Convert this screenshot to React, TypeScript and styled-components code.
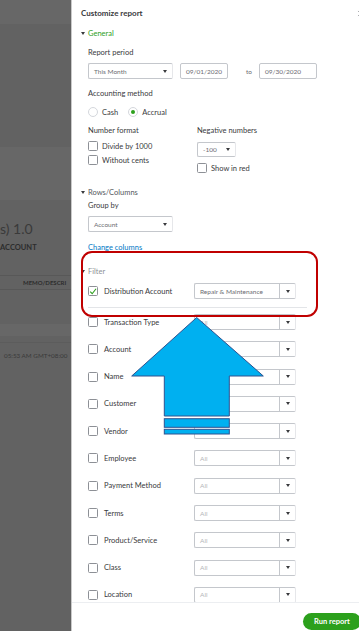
import styled, { createGlobalStyle } from "styled-components";
import { X } from "lucide-react";

const GlobalStyle = createGlobalStyle`
  html, body { margin: 0; padding: 0; }
  body {
    font-family: Lato, "Open Sans", sans-serif;
    color: #393a3d;
  }
`;

const Page = styled.div`
  position: relative;
  display: flex;
  width: 359px;
  height: 631px;
  overflow: hidden;
`;

/* ---------- dimmed report behind the drawer ---------- */

const Backdrop = styled.div`
  width: 71px;
  flex-shrink: 0;
  display: flex;
  flex-direction: column;
  background: #626262;
  color: #333;
  white-space: nowrap;
  overflow: hidden;
`;

const Band = styled.div<{ $h: number; $light?: boolean }>`
  height: ${(p) => p.$h}px;
  flex-shrink: 0;
  background: ${(p) => (p.$light ? "#676767" : "transparent")};
`;

const ReportTitle = styled.div`
  margin-top: 20px;
  font-size: 14px;
  line-height: 17px;
  color: #3a3a3a;
`;

const ReportSub = styled.div`
  margin-top: 6px;
  font-size: 7.5px;
  line-height: 10px;
  font-weight: 700;
  color: #2d2d2d;
`;

const TableHead = styled.div`
  margin-top: 22px;
  height: 13px;
  border-top: 1px solid #585858;
  border-bottom: 1px solid #585858;
  padding-left: 23px;
  font-size: 6px;
  line-height: 13px;
  font-weight: 700;
  color: #2d2d2d;
`;

const TimeCell = styled.div`
  margin-top: 6px;
  padding: 8px 0 0 4px;
  border-top: 1px solid #5c5c5c;
  font-size: 6.3px;
  line-height: 10px;
  color: #3a3a3a;
`;

/* ---------- drawer ---------- */

const Panel = styled.div`
  flex: 1;
  min-width: 0;
  display: flex;
  flex-direction: column;
  background: #fff;
  border-left: 1px solid #c9c9c9;
`;

const Scroll = styled.div`
  flex: 1;
  overflow: hidden;
  padding-left: 9px;
`;

const Header = styled.div`
  height: 26px;
  display: flex;
  align-items: center;
  justify-content: space-between;
  font-size: 8px;
  font-weight: 700;
  color: #393a3d;
  svg {
    margin-right: -6px;
    color: #6b6c72;
  }
`;

const Toggle = styled.div<{ $color?: string; $mt?: number }>`
  height: 14px;
  margin-top: ${(p) => p.$mt ?? 0}px;
  display: flex;
  align-items: center;
  gap: 3px;
  font-size: 7.5px;
  color: ${(p) => p.$color ?? "#55575d"};
  &::before {
    content: "";
    border-left: 2.5px solid transparent;
    border-right: 2.5px solid transparent;
    border-top: 3.5px solid #393a3d;
  }
`;

const Group = styled.div`
  padding-left: 7px;
  display: flex;
  flex-direction: column;
`;

const Label = styled.div<{ $mt?: number }>`
  margin-top: ${(p) => p.$mt ?? 0}px;
  height: 12px;
  line-height: 12px;
  font-size: 7.5px;
  color: #393a3d;
`;

const Row = styled.div<{ $mt?: number; $h?: number; $gap?: number }>`
  margin-top: ${(p) => p.$mt ?? 0}px;
  height: ${(p) => p.$h ?? 16}px;
  display: flex;
  align-items: center;
  gap: ${(p) => p.$gap ?? 0}px;
`;

const SelectBox = styled.div<{ $w: number; $h?: number; $mt?: number }>`
  box-sizing: border-box;
  width: ${(p) => p.$w}px;
  height: ${(p) => p.$h ?? 16}px;
  margin-top: ${(p) => p.$mt ?? 0}px;
  flex-shrink: 0;
  display: flex;
  align-items: center;
  border: 1px solid #c4c7cc;
  border-right-color: #e6e7ea;
  border-radius: 2px;
  font-size: 6.5px;
  color: #6b6c72;
`;

const SelectText = styled.span<{ $muted?: boolean }>`
  flex: 1;
  padding-left: 5px;
  white-space: nowrap;
  overflow: hidden;
  color: ${(p) => (p.$muted ? "#b3b5b9" : "#6b6c72")};
`;

const ArrowCell = styled.span<{ $split?: boolean }>`
  width: 15px;
  height: 100%;
  display: flex;
  align-items: center;
  justify-content: center;
  border-left: ${(p) => (p.$split ? "1px solid #c4c7cc" : "none")};
  &::after {
    content: "";
    border-left: 2.2px solid transparent;
    border-right: 2.2px solid transparent;
    border-top: 3px solid #393a3d;
  }
`;

const DateInput = styled.div<{ $w: number }>`
  box-sizing: border-box;
  width: ${(p) => p.$w}px;
  height: 16px;
  display: flex;
  align-items: center;
  padding-left: 5px;
  border: 1px solid #c4c7cc;
  border-radius: 2px;
  font-size: 6.5px;
  color: #6b6c72;
`;

const Spacer = styled.span<{ $w: number }>`
  width: ${(p) => p.$w}px;
  flex-shrink: 0;
`;

const To = styled.span`
  padding: 0 7px 0 18px;
  font-size: 6.5px;
  color: #6b6c72;
`;

const Radio = styled.span<{ $on?: boolean }>`
  box-sizing: border-box;
  width: 10px;
  height: 10px;
  border-radius: 50%;
  border: 1px solid #d4d7dc;
  display: flex;
  align-items: center;
  justify-content: center;
  &::after {
    content: "";
    display: ${(p) => (p.$on ? "block" : "none")};
    width: 4.5px;
    height: 4.5px;
    border-radius: 50%;
    background: #2ca01c;
  }
`;

const Option = styled.span`
  display: flex;
  align-items: center;
  gap: 4px;
  margin-right: 10px;
  font-size: 7.5px;
  color: #393a3d;
`;

const Box = styled.span`
  box-sizing: border-box;
  width: 10px;
  height: 10px;
  flex-shrink: 0;
  border: 1px solid #8d9096;
  border-radius: 1.5px;
  display: flex;
  align-items: center;
  justify-content: center;
`;

const CheckLabel = styled.span`
  font-size: 7.5px;
  color: #393a3d;
  white-space: nowrap;
`;

const Columns = styled.div`
  margin-top: 7px;
  display: flex;
`;

const Col = styled.div<{ $w?: number }>`
  width: ${(p) => (p.$w ? `${p.$w}px` : "auto")};
  display: flex;
  flex-direction: column;
`;

const Link = styled.div`
  margin-top: 10px;
  height: 12px;
  line-height: 12px;
  font-size: 7.5px;
  color: #0077c5;
`;

const FilterName = styled.div`
  width: 106px;
  flex-shrink: 0;
  display: flex;
  align-items: center;
  gap: 6px;
`;

const Divider = styled.div`
  margin-top: 8px;
  width: 219px;
  height: 1px;
  background: #e3e5e8;
`;

const FilterList = styled.div`
  margin-top: 6px;
  display: flex;
  flex-direction: column;
  gap: 11.3px;
`;

const Footer = styled.div`
  height: 29px;
  flex-shrink: 0;
  box-sizing: border-box;
  border-top: 1px solid #eceef1;
  display: flex;
  justify-content: flex-end;
  align-items: flex-start;
  padding-top: 10px;
`;

const RunButton = styled.button`
  width: 58px;
  height: 17px;
  margin-right: -2px;
  border: none;
  border-radius: 9px;
  background: #2ca01c;
  color: #fff;
  font-family: inherit;
  font-size: 7.5px;
  font-weight: 700;
  padding: 0;
`;

/* ---------- overlays ---------- */

const Highlight = styled.div`
  position: absolute;
  left: 81px;
  top: 251px;
  width: 237px;
  height: 66px;
  box-sizing: border-box;
  border: 2px solid #c00000;
  border-radius: 11px;
  pointer-events: none;
`;

const ArrowSvg = styled.svg`
  position: absolute;
  left: 130px;
  top: 316px;
  pointer-events: none;
`;

function Check() {
  return (
    <svg width="9" height="9" viewBox="0 0 10 10">
      <path d="M1.5 5.2 L4 7.8 L8.8 1.6" fill="none" stroke="#2ca01c" strokeWidth="1.4" />
    </svg>
  );
}

function Select(props: { w: number; text: string; h?: number; mt?: number; muted?: boolean; split?: boolean }) {
  return (
    <SelectBox $w={props.w} $h={props.h} $mt={props.mt}>
      <SelectText $muted={props.muted}>{props.text}</SelectText>
      <ArrowCell $split={props.split} />
    </SelectBox>
  );
}

const filters = [
  "Transaction Type",
  "Account",
  "Name",
  "Customer",
  "Vendor",
  "Employee",
  "Payment Method",
  "Terms",
  "Product/Service",
  "Class",
  "Location",
];

export default function App() {
  return (
    <Page>
      <GlobalStyle />
      <Backdrop>
        <Band $h={24} $light />
        <Band $h={123} />
        <Band $h={53} $light />
        <ReportTitle>s) 1.0</ReportTitle>
        <ReportSub>ACCOUNT</ReportSub>
        <TableHead>MEMO/DESCRI</TableHead>
        <Band $h={34} />
        <Band $h={12} $light />
        <TimeCell>05:53 AM GMT+08:00</TimeCell>
      </Backdrop>

      <Panel>
        <Scroll>
          <Header>
            Customize report
            <X size={9} strokeWidth={1.5} />
          </Header>

          <Toggle $color="#2ca01c">General</Toggle>
          <Group>
            <Label $mt={7}>Report period</Label>
            <Row $mt={4}>
              <Select w={85} text="This Month" />
              <Spacer $w={7} />
              <DateInput $w={48}>09/01/2020</DateInput>
              <To>to</To>
              <DateInput $w={58}>09/30/2020</DateInput>
            </Row>
            <Label $mt={9}>Accounting method</Label>
            <Row $mt={6} $h={12}>
              <Option>
                <Radio />
                Cash
              </Option>
              <Option>
                <Radio $on />
                Accrual
              </Option>
            </Row>
            <Columns>
              <Col $w={109}>
                <Label>Number format</Label>
                <Row $mt={4} $h={10} $gap={4}>
                  <Box />
                  <CheckLabel>Divide by 1000</CheckLabel>
                </Row>
                <Row $mt={4} $h={10} $gap={4}>
                  <Box />
                  <CheckLabel>Without cents</CheckLabel>
                </Row>
              </Col>
              <Col>
                <Label>Negative numbers</Label>
                <Select w={39} h={15} mt={5} text="-100" />
                <Row $mt={6} $h={10} $gap={4}>
                  <Box />
                  <CheckLabel>Show in red</CheckLabel>
                </Row>
              </Col>
            </Columns>
          </Group>

          <Toggle $mt={12}>Rows/Columns</Toggle>
          <Group>
            <Label $mt={1}>Group by</Label>
            <Select w={85} mt={4} text="Account" />
            <Link>Change columns</Link>
          </Group>

          <Toggle $mt={10} $color="#8d9096">Filter</Toggle>
          <Group>
            <Row $mt={5}>
              <FilterName>
                <Box>
                  <Check />
                </Box>
                <CheckLabel>Distribution Account</CheckLabel>
              </FilterName>
              <Select w={102} split text="Repair & Maintenance" />
            </Row>
            <Divider />
            <FilterList>
              {filters.map((f) => (
                <Row key={f}>
                  <FilterName>
                    <Box />
                    <CheckLabel>{f}</CheckLabel>
                  </FilterName>
                  <Select w={102} split muted text="All" />
                </Row>
              ))}
            </FilterList>
          </Group>
        </Scroll>
        <Footer>
          <RunButton>Run report</RunButton>
        </Footer>
      </Panel>

      <Highlight />
      <ArrowSvg width="136" height="120" viewBox="0 0 136 120">
        <polygon
          points="66.7,1.5 133.3,60 99.3,60 99.3,100 34.3,100 34.3,60 1.7,60"
          fill="#00b0f0"
          stroke="#2f528f"
          strokeWidth="1"
        />
        <rect x="34.3" y="102.7" width="65" height="8.6" fill="#00b0f0" stroke="#2f528f" strokeWidth="1" />
        <rect x="34.3" y="113.3" width="65" height="4.7" fill="#00b0f0" stroke="#2f528f" strokeWidth="1" />
      </ArrowSvg>
    </Page>
  );
}
